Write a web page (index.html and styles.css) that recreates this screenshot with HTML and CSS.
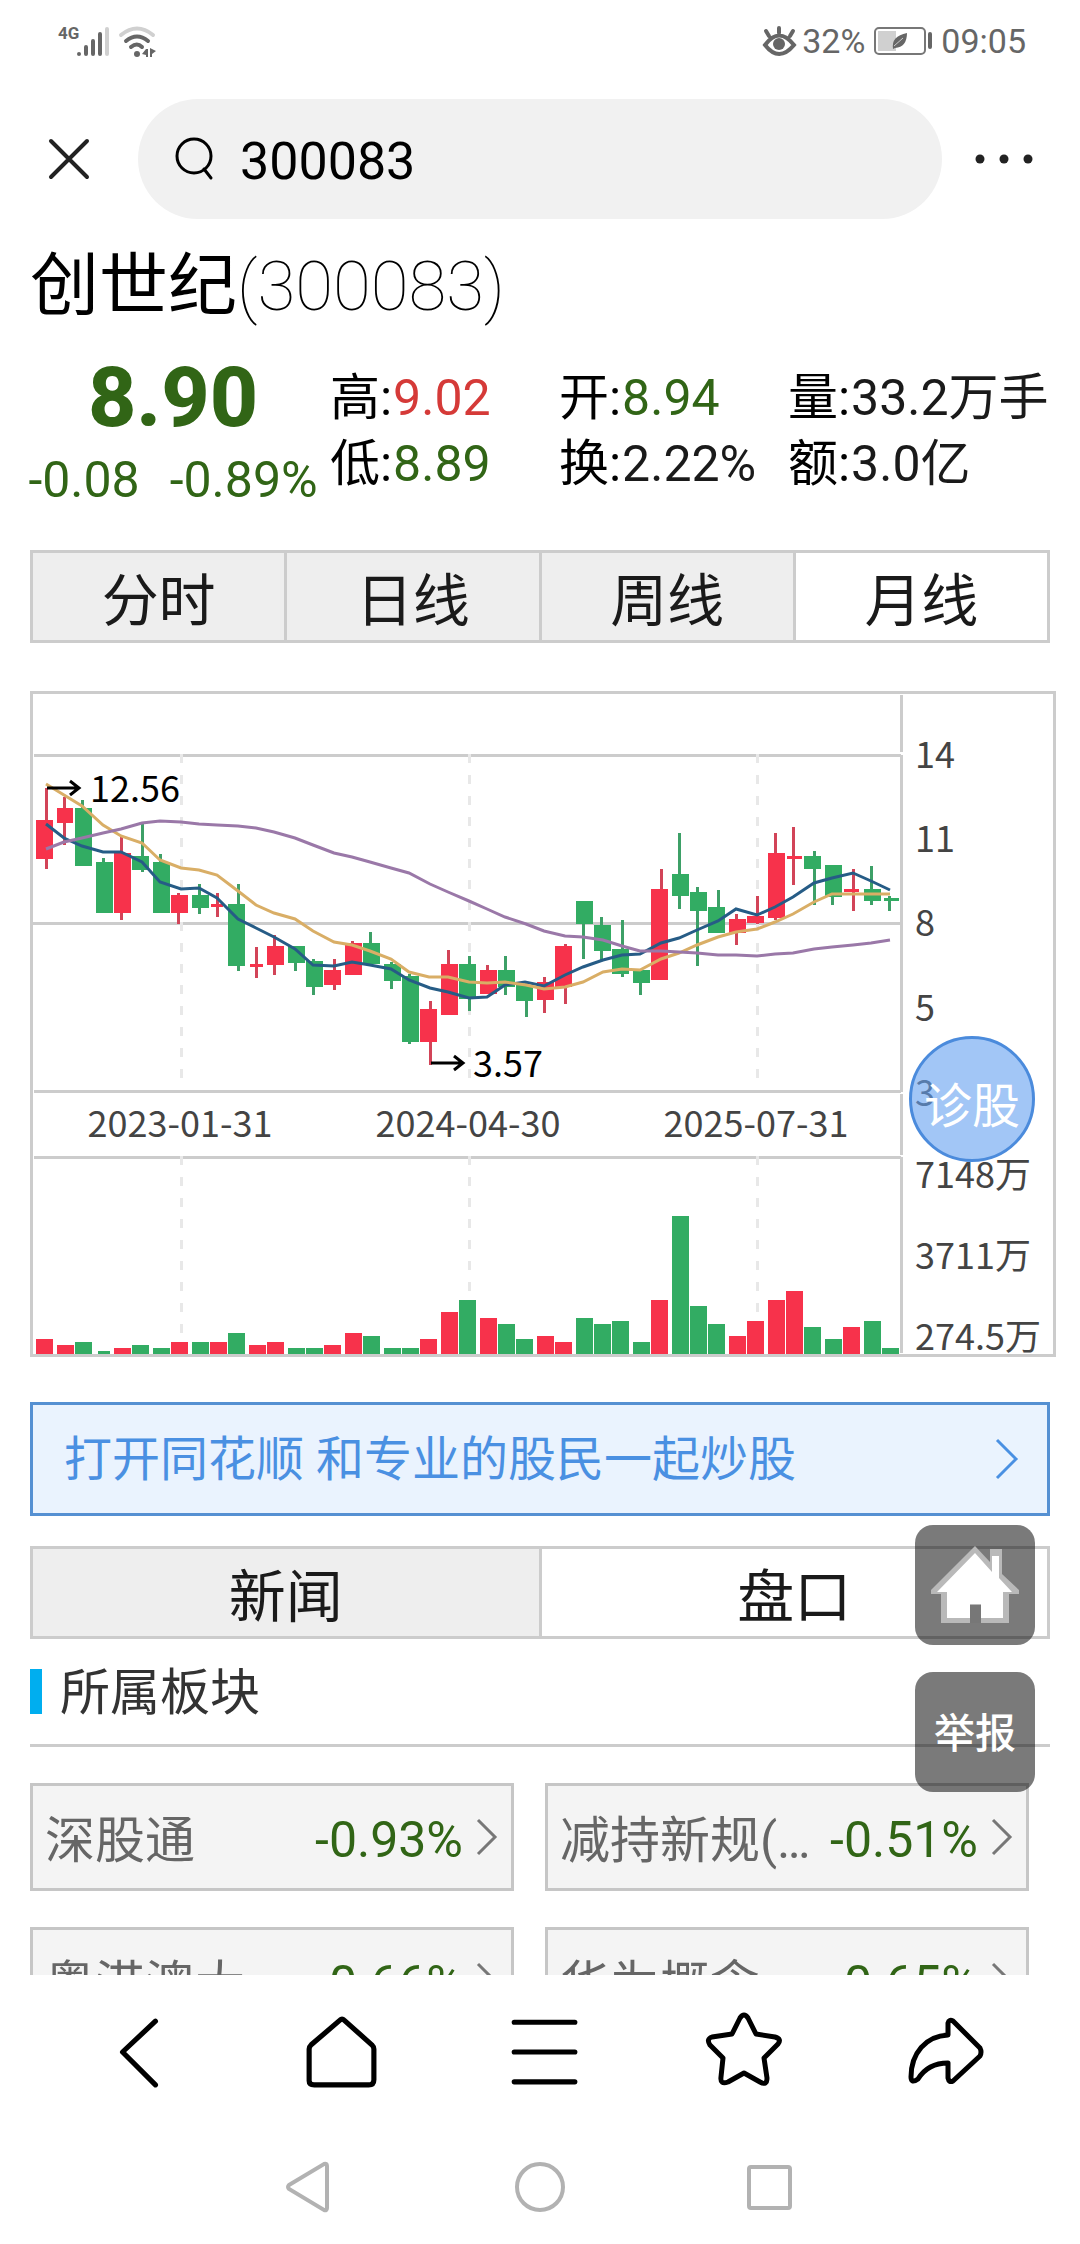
FILE: index.html
```html
<!DOCTYPE html>
<html lang="zh-CN">
<head>
<meta charset="utf-8">
<meta name="viewport" content="width=device-width, initial-scale=1">
<title>创世纪(300083)</title>
<link rel="stylesheet" href="styles.css">
</head>
<body>
<div class="status">
  <div class="status-side">
    <span class="network">4G</span>
    <svg width="33" height="32" viewBox="77 24 33 32" fill="none" stroke="#666" stroke-width="4" stroke-linecap="round" aria-hidden="true">
      <path d="M79 53v0M86 46v7M93 40v13M100 33v20"/><path stroke="#d0d0d0" d="M107 28v25"/>
    </svg>
    <svg class="wifi" width="38" height="32" viewBox="118 24 38 32" fill="none" stroke="#666" stroke-width="4" stroke-linecap="round" aria-hidden="true">
      <path stroke="#d0d0d0" d="M121 34Q137 21 153 34"/><path d="M126 40Q137 31 148 40M131 46Q137 41 142 46"/>
      <g fill="#666" stroke="none"><circle cx="137" cy="53" r="3"/><path d="M142 53l4-5h2v8h-2v-2zM150 47l6 3-4 3v3h-2z"/></g>
    </svg>
  </div>
  <div class="status-side">
    <svg width="36" height="32" viewBox="762 25 36 32" fill="none" stroke="#666" stroke-width="4" stroke-linecap="round" aria-hidden="true">
      <path d="M765 45Q779 26 794 45Q779 63 765 45zM779 28v5M766 31l3 5M793 31l-3 5"/><circle cx="779" cy="44" r="6" fill="#666" stroke="none"/>
    </svg>
    <span>32%</span>
    <svg class="battery" width="60" height="30" viewBox="873 26 60 30" aria-hidden="true">
      <rect x="875" y="28" width="50" height="26" rx="4" fill="none" stroke="#777" stroke-width="2"/>
      <rect x="878" y="31" width="18" height="20" fill="#d0d0d0"/><rect x="928" y="32" width="4" height="17" rx="2" fill="#666"/>
      <path d="M893 49Q891 36 907 33Q907 47 895 48z" fill="#666"/><path d="M894 46l9-8" stroke="#ccc"/>
    </svg>
    <span>09:05</span>
  </div>
</div>

<header class="topbar">
  <button class="icon-btn close" aria-label="关闭">
    <svg width="42" height="42" viewBox="48 138 42 42" fill="none" stroke="#222" stroke-width="4" stroke-linecap="round"><path d="M51 141l36 36M87 141l-36 36"/></svg>
  </button>
  <label class="search">
    <svg width="40" height="44" viewBox="175 136 40 44" fill="none" stroke="#000" stroke-width="3" stroke-linecap="round" aria-hidden="true"><circle cx="194" cy="155" r="17"/><path d="M204 168l7 9"/></svg>
    <input type="text" value="300083" aria-label="搜索">
  </label>
  <button class="icon-btn more" aria-label="更多">
    <svg width="60" height="12" viewBox="974 152 60 12" fill="#222"><circle cx="980" cy="158" r="4.500"/><circle cx="1004" cy="158" r="4.500"/><circle cx="1028" cy="158" r="4.500"/></svg>
  </button>
</header>

<main class="page">
  <h1 class="title">创世纪<span>(300083)</span></h1>

  <section class="quote">
    <div class="price">
      <strong>8.90</strong>
      <div class="change"><span>-0.08</span><span>-0.89%</span></div>
    </div>
    <dl class="stats">
      <div><dt>高:</dt><dd class="up">9.02</dd></div>
      <div><dt>开:</dt><dd class="down">8.94</dd></div>
      <div><dt>量:</dt><dd>33.2万手</dd></div>
      <div><dt>低:</dt><dd class="down">8.89</dd></div>
      <div><dt>换:</dt><dd>2.22%</dd></div>
      <div><dt>额:</dt><dd>3.0亿</dd></div>
    </dl>
  </section>

  <nav class="tabs">
    <button>分时</button><button>日线</button><button>周线</button><button class="active">月线</button>
  </nav>

  <figure class="chart">
    <svg viewBox="30 691 1026 666" role="img" aria-label="月线">
      <path class="frame" d="M31.500 692.500H1054.500V1355.500H31.500z"/>
      <path class="frame" d="M34 755.500H901M33 923.500H901M34 1091.500H901M34 1157.500H901M901.500 695V752M901.500 755V1092M901.500 1094V1155M901.500 1157V1353"/>
      <path class="dash" d="M181.500 754V1090M469.500 754V1090M757.500 754V1090M181.500 1156V1354M469.500 1156V1354M757.500 1156V1354"/>
      <g class="wick-up">
        <path d="M46.500 788V869M64.500 797V845M121.500 836V920M178.500 893V924M217.500 893V917M256.500 947V978M274.500 935V975M334.500 959V990M352.500 941V975M430.500 1001V1065M448.500 950V1015M487.500 965V994M544.500 977V1013M565.500 944V1004M661.500 869V980M736.500 914V945M757.500 896V924M775.500 833V920M793.500 827V885M853.500 869V911"/>
      </g>
      <g class="wick-down">
        <path d="M82.500 800V866M103.500 858V913M142.500 823V872M160.500 854V913M199.500 884V914M238.500 884V971M295.500 946V971M313.500 959V995M370.500 932V964M391.500 962V989M409.500 974V1044M469.500 956V1011M505.500 956V995M526.500 982V1017M583.500 901V959M601.500 917V960M622.500 920V977M640.500 970V995M679.500 833V909M697.500 887V966M718.500 890V933M814.500 851V905M832.500 865V905M871.500 866V905M889.500 896V911"/>
      </g>
      <path class="up-bar" d="M36 820h17v39h-17zM57 808h16v15h-16zM114 853h17v60h-17zM171 895h17v18h-17zM211 904h12v3h-12zM250 964h13v3h-13zM267 946h17v19h-17zM324 970h17v15h-17zM345 943h17v32h-17zM420 1009h17v33h-17zM441 964h17v51h-17zM480 970h17v24h-17zM537 982h17v18h-17zM555 946h17v41h-17zM651 889h17v91h-17zM729 919h17v14h-17zM747 916h17v7h-17zM768 853h17v65h-17zM787 856h15v3h-15zM844 889h15v3h-15z"/>
      <path class="down-bar" d="M75 808h17v58h-17zM96 862h17v51h-17zM132 856h17v14h-17zM153 862h17v51h-17zM192 895h17v13h-17zM228 904h17v62h-17zM288 946h17v17h-17zM306 961h17v26h-17zM363 943h17v21h-17zM384 964h17v17h-17zM402 976h17v66h-17zM459 964h17v35h-17zM498 970h17v17h-17zM516 985h17v16h-17zM576 901h17v23h-17zM594 925h17v26h-17zM612 949h17v25h-17zM633 970h17v13h-17zM672 874h17v22h-17zM690 892h17v19h-17zM708 907h17v26h-17zM804 856h17v13h-17zM825 865h17v32h-17zM864 889h17v12h-17zM884 898h15v3h-15z"/>
      <path class="up-bar" d="M36 1339h17v15h-17zM57 1345h17v9h-17zM114 1348h17v6h-17zM171 1342h17v12h-17zM210 1342h17v12h-17zM249 1345h17v9h-17zM267 1342h17v12h-17zM324 1345h17v9h-17zM345 1333h17v21h-17zM420 1339h17v15h-17zM441 1312h17v42h-17zM480 1318h17v36h-17zM537 1336h17v18h-17zM555 1342h17v12h-17zM651 1300h17v54h-17zM729 1336h17v18h-17zM747 1321h17v33h-17zM768 1300h17v54h-17zM786 1291h17v63h-17zM843 1327h17v27h-17z"/>
      <path class="down-bar" d="M75 1342h17v12h-17zM98 1351h12v3h-12zM132 1345h17v9h-17zM153 1348h17v6h-17zM192 1342h17v12h-17zM228 1333h17v21h-17zM288 1348h17v6h-17zM306 1348h17v6h-17zM363 1336h17v18h-17zM384 1348h17v6h-17zM402 1348h17v6h-17zM459 1300h17v54h-17zM498 1324h17v30h-17zM516 1339h17v15h-17zM576 1318h17v36h-17zM594 1324h17v30h-17zM612 1321h17v33h-17zM633 1342h17v12h-17zM672 1216h17v138h-17zM690 1306h17v48h-17zM708 1324h17v30h-17zM804 1327h17v27h-17zM825 1339h17v15h-17zM864 1321h17v33h-17zM882 1348h17v6h-17z"/>
      <polyline class="line ma5" points="46,824 64,838 82,846 103,852 121,852 142,862 160,882 181,889 199,888 217,898 238,919 256,928 274,937 295,949 313,965 334,966 352,962 370,965 391,969 409,980 430,988 448,992 469,998 487,997 505,985 525,982 544,986 565,975 583,967 603,960 622,955 640,954 661,943 679,938 697,930 718,921 736,909 757,915 775,907 793,897 814,883 832,878 853,873 871,881 890,890"/>
      <polyline class="line ma10" points="46,784 64,795 82,806 103,825 121,836 142,843 160,860 181,868 199,870 217,875 238,891 256,905 274,913 295,919 313,931 334,942 352,945 370,951 391,959 409,972 429,977 448,977 469,982 487,983 505,982 526,985 544,989 565,987 583,982 603,972 622,969 640,970 661,959 679,953 697,945 718,937 736,932 757,929 775,922 793,914 814,902 832,894 853,894 890,894"/>
      <polyline class="line ma30" points="46,849 64,842 82,838 103,833 121,829 142,823 160,821 181,822 199,824 217,825 238,826 256,828 274,832 295,838 313,845 334,853 352,857 370,862 391,868 409,873 430,884 448,892 469,901 487,909 505,917 526,924 544,931 565,936 583,937 603,940 622,946 640,951 661,951 679,952 697,953 718,955 736,955 757,956 775,954 793,953 814,949 832,947 853,945 871,943 890,940"/>
      <path class="arrow" d="M47 788H79M70 781L79 788L70 795M431 1063H463M454 1056L463 1063L454 1070"/>
      <g class="extreme"><text x="90" y="802">12.56</text><text x="473" y="1077">3.57</text></g>
      <g class="axis">
        <g text-anchor="middle"><text x="180" y="1137">2023-01-31</text><text x="468" y="1137">2024-04-30</text><text x="756" y="1137">2025-07-31</text></g>
        <text x="915" y="768">14</text><text x="915" y="852">11</text><text x="915" y="936">8</text><text x="915" y="1021">5</text><text x="915" y="1106">3</text>
        <text x="915" y="1188">7148万</text><text x="915" y="1269">3711万</text><text x="915" y="1350">274.5万</text>
      </g>
    </svg>
    <button class="diagnose">诊股</button>
  </figure>

  <a class="banner" href="#">
    <span>打开同花顺 和专业的股民一起炒股</span>
    <svg width="22" height="42" viewBox="0 0 22 42" fill="none" stroke="#4a90e2" stroke-width="3" aria-hidden="true"><path d="M1 2l19 19L1 40"/></svg>
  </a>

  <nav class="tabs">
    <button>新闻</button><button class="active">盘口</button>
  </nav>

  <h2 class="heading"><span>所属板块</span></h2>

  <div class="sectors">
    <a href="#"><span class="name">深股通</span><span class="pct">-0.93%</span><svg width="20" height="38" viewBox="0 0 20 38" aria-hidden="true"><path d="M1 2l17 17L1 36"/></svg></a>
    <a href="#"><span class="name">减持新规(…</span><span class="pct">-0.51%</span><svg width="20" height="38" viewBox="0 0 20 38" aria-hidden="true"><path d="M1 2l17 17L1 36"/></svg></a>
    <a href="#"><span class="name">粤港澳大…</span><span class="pct">-0.66%</span><svg width="20" height="38" viewBox="0 0 20 38" aria-hidden="true"><path d="M1 2l17 17L1 36"/></svg></a>
    <a href="#"><span class="name">华为概念</span><span class="pct">-0.65%</span><svg width="20" height="38" viewBox="0 0 20 38" aria-hidden="true"><path d="M1 2l17 17L1 36"/></svg></a>
  </div>

  <div class="floating">
    <button aria-label="首页">
      <svg width="88" height="78" viewBox="931 1544 88 78"><path fill="#b9b9b9" d="M975 1544L990 1560V1547H1002V1572L1019 1588V1592H1009V1621H941V1592H931V1588z"/><path fill="#fff" d="M975 1551L992 1570V1554H999V1576L1012 1590H1003V1616H981V1602H970V1616H947V1590H937z"/><path fill="#777" d="M970 1603h11v18h-11z"/></svg>
    </button>
    <button class="report">举报</button>
  </div>
</main>

<nav class="toolbar">
  <button aria-label="后退"><svg viewBox="101 2016 72 72"><path d="M153 2022L121 2052L153 2084"/></svg></button>
  <button aria-label="主页"><svg viewBox="304 2016 72 72"><path d="M309 2049V2080Q309 2084 314 2084H367Q372 2084 372 2079V2049Q372 2047 370 2045L343 2021Q341 2019 339 2021L311 2045Q309 2047 309 2049z"/></svg></button>
  <button aria-label="菜单"><svg viewBox="507 2016 72 72"><path d="M515 2023H574M515 2052H574M515 2081H574"/></svg></button>
  <button aria-label="收藏"><svg viewBox="708 2015 74 74"><path d="M740 2018Q744 2012 748 2018L756 2034L775 2037Q782 2039 778 2044L764 2058L767 2078Q767 2086 760 2082L744 2073L728 2082Q720 2085 721 2077L723 2058L710 2045Q706 2039 712 2037L732 2034z"/></svg></button>
  <button aria-label="分享"><svg viewBox="910 2016 74 72"><path d="M948 2035V2023Q949 2019 953 2021L980 2048Q982 2052 980 2056L953 2081Q949 2083 948 2078V2063Q928 2063 918 2079Q911 2084 911 2077C911 2053 926 2036 948 2035z"/></svg></button>
</nav>
<nav class="sysnav">
  <button aria-label="返回"><svg viewBox="0 0 50 54"><path d="M4 25L39 4Q42 3 42 6V48Q42 51 39 50L4 29Q2 27 4 25z"/></svg></button>
  <button aria-label="桌面"><svg viewBox="0 0 50 54"><circle cx="25" cy="27" r="23"/></svg></button>
  <button aria-label="最近任务"><svg viewBox="0 0 50 54"><rect x="4" y="7" width="41" height="41" rx="2"/></svg></button>
</nav>
</body>
</html>
```
FILE: styles.css
```css
* { box-sizing: border-box; }

body {
  margin: 0;
  height: 100vh;
  display: flex;
  flex-direction: column;
  background: #fff;
  color: #1a1a1a;
  font-family: Roboto, "Noto Sans CJK SC", sans-serif;
}

button {
  padding: 0;
  border: 0;
  background: none;
  color: inherit;
  font: inherit;
}

a { color: inherit; text-decoration: none; }

svg { display: block; flex: none; overflow: visible; }

h1, h2, dl, dd, figure { margin: 0; }

.status {
  flex: none;
  height: 84px;
  padding: 0 54px 2px 58px;
  display: flex;
  justify-content: space-between;
  align-items: center;
  color: #666;
  font-size: 34px;
}

.status-side { display: flex; align-items: center; gap: 4px; }
.network { align-self: flex-start; margin-right: -6px; font-size: 17px; font-weight: 700; line-height: 16px; }
.wifi { margin-left: 4px; }
.battery { margin: 0 4px; }

.topbar {
  flex: none;
  display: flex;
  align-items: center;
  padding: 15px 0 0;
}

.icon-btn { display: grid; place-items: center; }
.close { width: 138px; height: 120px; }
.more { width: 138px; height: 120px; padding-right: 14px; }

.search {
  flex: 1;
  min-width: 0;
  height: 120px;
  display: flex;
  align-items: center;
  gap: 25px;
  padding: 0 37px;
  border-radius: 60px;
  background: #f1f1f1;
}

.search input {
  flex: 1;
  min-width: 0;
  padding: 4px 0 0;
  border: 0;
  outline: 0;
  background: none;
  color: #000;
  font: 52px Roboto, sans-serif;
}

.page {
  position: relative;
  flex: 1;
  min-height: 0;
  overflow: hidden;
  padding: 24px 30px 0;
}

.title {
  color: #000;
  font-size: 69px;
  font-weight: 400;
  line-height: 88px;
}

.title span { font-weight: 100; }

.quote {
  display: grid;
  grid-template-columns: 286px 1fr;
  column-gap: 14px;
  padding: 19px 0 36px;
}

.price { color: #316516; text-align: center; }
.price strong { display: block; font-size: 84px; font-weight: 800; line-height: 96px; }
.change { display: flex; justify-content: center; gap: 30px; font-size: 50px; line-height: 68px; white-space: nowrap; }

.stats {
  display: grid;
  grid-template-columns: 229px 229px 1fr;
  padding-top: 15px;
  align-content: start;
  font-size: 50px;
  line-height: 66px;
  white-space: nowrap;
}

.stats div { display: flex; gap: 1px; height: 66px; }
.stats dt { color: #000; }
.up { color: #d53a38; }
.down, .pct { color: #316516; }

.tabs {
  display: flex;
  gap: 3px;
  border: 3px solid #ccc;
  background: #ccc;
}

.tabs button {
  flex: 1;
  height: 87px;
  padding-top: 10px;
  background: #eee;
  font-size: 57px;
  line-height: 77px;
}

.tabs .active { background: #fff; }

.chart { position: relative; margin: 48px -6px 45px 0; }
.chart svg { width: 100%; height: auto; }
.chart text { font-family: "Noto Sans CJK SC", sans-serif; font-size: 36px; }
.frame, .dash { fill: none; stroke: #ccc; stroke-width: 3; }
.dash { stroke: #e8e8e8; stroke-dasharray: 9 12; }
.wick-up { stroke: #d24458; stroke-width: 3; }
.wick-down { stroke: #3da067; stroke-width: 3; }
.up-bar { fill: #f7324b; }
.down-bar { fill: #32ac63; }
.line { fill: none; stroke-width: 3; }
.ma5 { stroke: #265c86; }
.ma10 { stroke: #d9ae66; }
.ma30 { stroke: #9a78a8; }
.arrow { fill: none; stroke: #000; stroke-width: 3; }
.extreme { fill: #000; }
.axis { fill: #444; }

.diagnose {
  position: absolute;
  right: 21px;
  bottom: 195px;
  width: 126px;
  height: 126px;
  padding-top: 6px;
  border: 3px solid #4b8bdc;
  border-radius: 50%;
  background: rgba(100, 160, 240, .6);
  color: #fff;
  font-size: 48px;
  white-space: nowrap;
}

.banner {
  display: flex;
  justify-content: space-between;
  align-items: center;
  height: 114px;
  margin-bottom: 30px;
  padding: 0 29px 0 31px;
  border: 3px solid #5590d2;
  background: #eaf3fe;
  color: #4a90e2;
  font-size: 48px;
}

.banner span { padding-bottom: 8px; }

.heading {
  display: flex;
  align-items: center;
  gap: 18px;
  height: 108px;
  border-bottom: 3px solid #ccc;
  color: #333;
  font-size: 50px;
  font-weight: 400;
}

.heading span { padding-bottom: 8px; }
.heading::before { content: ""; width: 12px; height: 45px; background: #00aeef; }

.sectors {
  display: grid;
  grid-template-columns: 1fr 1fr;
  gap: 36px 31px;
  margin: 36px 21px 0 0;
}

.sectors a {
  display: flex;
  align-items: center;
  height: 108px;
  padding: 0 14px 0 12px;
  border: 3px solid #c6c6c6;
  background: #f4f4f4;
  color: #666;
  font-size: 50px;
  white-space: nowrap;
}

.name { flex: 1; padding-bottom: 2px; }
.pct { padding-top: 6px; margin-right: 14px; }
.sectors svg { fill: none; stroke: #777; stroke-width: 3; }

.floating {
  position: absolute;
  right: 45px;
  bottom: 183px;
  display: grid;
  gap: 27px;
}

.floating button {
  display: grid;
  place-items: center;
  width: 120px;
  height: 120px;
  border-radius: 18px;
  background: rgba(0, 0, 0, .52);
  color: #fff;
  font-size: 41px;
  font-weight: 500;
}

.floating .report { padding-bottom: 5px; }

.toolbar {
  flex: none;
  display: grid;
  grid-template-columns: repeat(5, 1fr);
  height: 154px;
  padding: 0 32px 0 38px;
}

.toolbar button, .sysnav button { display: grid; place-items: center; }
.toolbar svg { width: 74px; height: 74px; fill: none; stroke: #000; stroke-width: 5; stroke-linecap: round; stroke-linejoin: round; }

.sysnav {
  flex: none;
  display: grid;
  grid-template-columns: repeat(3, 230px);
  justify-content: center;
  height: 115px;
}

.sysnav svg { width: 50px; height: 54px; fill: none; stroke: #b2b2b2; stroke-width: 4; }
```
